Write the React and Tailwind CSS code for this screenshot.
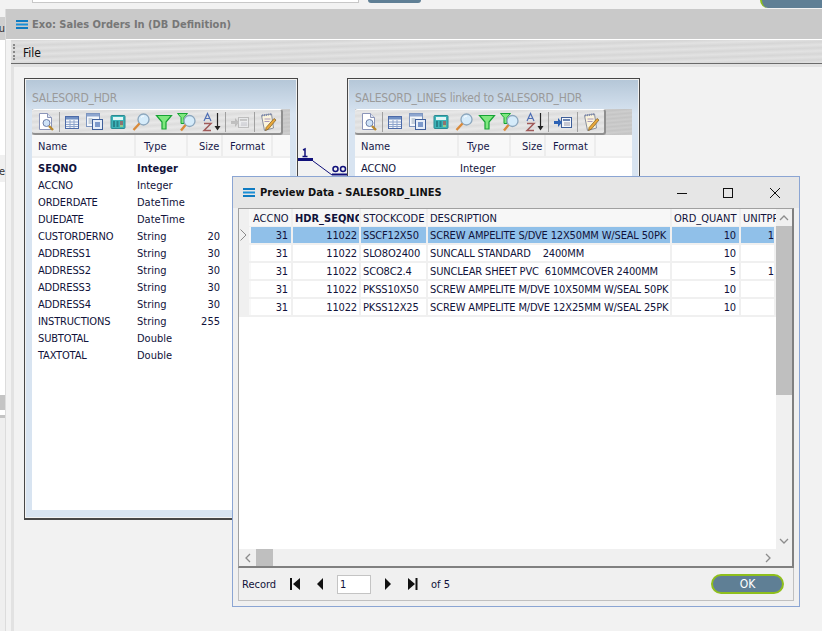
import React from "react";

const DocIcon = () => (
  <svg width="20" height="20" viewBox="0 0 20 20">
    <path d="M3.500 1.500h8l4 4v12h-12z" fill="#fff" stroke="#8a94b8" />
    <path d="M11.500 1.500v4h4" fill="#dfe6f2" stroke="#8a94b8" />
    <circle cx="10.500" cy="11" r="3.500" fill="#cfe3f7" stroke="#6d7fa8" />
    <path d="M13 14l4 4" stroke="#b8892e" strokeWidth="2.400" />
  </svg>
);
const TableIcon = () => (
  <svg width="18" height="18" viewBox="0 0 18 18">
    <rect x="2.500" y="3.500" width="13" height="12" fill="#f4f7fb" stroke="#4c6aa8" />
    <rect x="3" y="4" width="12" height="2.500" fill="#6f8fc4" />
    <path d="M3 9h12M3 11.500h12M3 13.500h12M7 7v8M11 7v8" stroke="#8ea4cc" />
  </svg>
);
const WindowsIcon = () => (
  <svg width="20" height="20" viewBox="0 0 20 20">
    <rect x="1.500" y="1.500" width="13" height="13" fill="#f4f7fb" stroke="#7d95bf" />
    <rect x="2" y="2" width="12" height="2.500" fill="#8ea6cf" />
    <path d="M3.500 7h4M3.500 9h4M3.500 11h4" stroke="#9ab" />
    <rect x="7.500" y="7.500" width="10" height="10" fill="#e6eef8" stroke="#3f5f9a" />
    <rect x="10" y="10" width="5" height="5" fill="#7d9acb" />
  </svg>
);
const CalcIcon = () => (
  <svg width="18" height="18" viewBox="0 0 18 18">
    <rect x="2" y="2.500" width="14" height="13" rx="1" fill="#3cb4b8" stroke="#2a8a92" />
    <rect x="4" y="4" width="10" height="3" fill="#e0f6f6" />
    <path d="M4 9h2M7.500 9h2M4 11h2M7.500 11h2M4 13h2M7.500 13h2" stroke="#14505c" />
    <path d="M11 9h3M11 11h3" stroke="#e0352b" />
    <path d="M11 13h3" stroke="#f1e05a" />
  </svg>
);
const MagIcon = () => (
  <svg width="20" height="20" viewBox="0 0 20 20">
    <circle cx="12.500" cy="7.500" r="5.500" fill="#d5ebfa" stroke="#8ba6bd" strokeWidth="1.300" />
    <path d="M10 5.500a3.500 3.500 0 0 1 3-1.500" stroke="#fff" fill="none" />
    <path d="M8.500 11.500L2.500 18" stroke="#d98a3a" strokeWidth="2.400" />
  </svg>
);
const FunnelIcon = () => (
  <svg width="20" height="20" viewBox="0 0 20 20">
    <path d="M2.500 3.500h15l-5.500 6.500v7h-4v-7z" fill="#7fe87f" stroke="#17a335" strokeWidth="1.200" />
  </svg>
);
const FunnelMagIcon = () => (
  <svg width="22" height="20" viewBox="0 0 22 20">
    <path d="M1.500 1.500h10l-3.500 4v6h-3v-6z" fill="#7fe87f" stroke="#17a335" />
    <circle cx="13.500" cy="9" r="5.500" fill="#d5ebfa" stroke="#8ba6bd" strokeWidth="1.300" />
    <path d="M9.500 13L5 18.500" stroke="#d98a3a" strokeWidth="2.400" />
  </svg>
);
const SortIcon = () => (
  <svg width="22" height="20" viewBox="0 0 22 20">
    <path d="M3 9L6.500 1.500L10 9M4.500 6.500h4" fill="none" stroke="#4f6fb5" strokeWidth="1.200" />
    <path d="M3 11.500h7L3 18.500h7" fill="none" stroke="#a05a5a" strokeWidth="1.500" />
    <path d="M16.500 1v15" stroke="#222" strokeWidth="1.200" />
    <path d="M13.500 14h6l-3 4.500z" fill="#222" />
  </svg>
);
const MoveIcon = ({ off }) => (
  <svg width="20" height="16" viewBox="0 0 20 16" opacity={off ? 0.4 : 1}>
    <rect x="8.500" y="3.500" width="10" height="10" fill="#f4f7fb" stroke={off ? "#888" : "#3f5f9a"} />
    <path d="M10 6h7" stroke={off ? "#888" : "#3f5f9a"} strokeWidth="1.500" />
    <path d="M11 9h6M11 11h6" stroke="#99a" />
    <path d="M1 7h4V4l4 4.500L5 13v-3H1z" fill={off ? "#888" : "#2d62b5"} />
  </svg>
);
const NoteIcon = () => (
  <svg width="20" height="20" viewBox="0 0 20 20">
    <path d="M3.500 3.500l10-1.500 2 14-9 2.500z" fill="#fbf4dc" stroke="#8a8f9e" />
    <path d="M4 3.500l10-1.500" stroke="#7a88b0" strokeWidth="2" strokeDasharray="1 1" />
    <path d="M6.500 7h6M6.500 9.500h5" stroke="#a9b" />
    <path d="M16 6.500l2 1.500-7.500 9-3 1.500.6-3z" fill="#e9a83a" stroke="#7a5a20" strokeWidth=".7" />
  </svg>
);

const Sep = () => <div className="w-px h-[20px] bg-[#a0a0a0]" />;
const Slot = ({ w, children }) => (
  <div className={`${w} flex items-center justify-center`}>{children}</div>
);

const Toolbar = ({ off }) => (
  <div className="flex h-[26px] shrink-0 bg-[#c9c9c9] bg-[repeating-linear-gradient(175deg,#c4c4c4_0px,#cecece_2px,#c4c4c4_4px)]">
    <div className="w-[251px] flex items-center rounded-[3px] border-b-2 border-r-2 border-[#8f8f8f] border-t border-t-white bg-[#e2e2e2] bg-[repeating-linear-gradient(176deg,#dcdcdc_0px,#e8e8e8_3px,#dcdcdc_6px)]">
      <Slot w="w-[27px]"><DocIcon /></Slot>
      <Sep />
      <Slot w="w-[23px]"><TableIcon /></Slot>
      <Slot w="w-[23px]"><WindowsIcon /></Slot>
      <Slot w="w-[23px]"><CalcIcon /></Slot>
      <Slot w="w-[23px]"><MagIcon /></Slot>
      <Slot w="w-[23px]"><FunnelIcon /></Slot>
      <Slot w="w-[23px]"><FunnelMagIcon /></Slot>
      <Slot w="w-[27px]"><SortIcon /></Slot>
      <Sep />
      <Slot w="w-[28px]"><MoveIcon off={off} /></Slot>
      <Sep />
      <Slot w="w-[26px]"><NoteIcon /></Slot>
    </div>
  </div>
);

const HeadCell = ({ w, pl, children }) => (
  <div className={`${w} ${pl} h-full shrink-0 flex items-center pt-[2px] border-r-2 border-[#ededed]`}>{children}</div>
);

const Head = () => (
  <div className="flex h-[23px] shrink-0 items-center bg-[#f8f8f8] border-b-2 border-[#efefef] text-[#16184a]">
    <HeadCell w="w-[104px]" pl="pl-[6px]">Name</HeadCell>
    <HeadCell w="w-[52px]" pl="pl-[8px]">Type</HeadCell>
    <HeadCell w="w-[35px]" pl="pl-[11px]">Size</HeadCell>
    <HeadCell w="w-[50px]" pl="pl-[7px]">Format</HeadCell>
    <div className="flex-1" />
  </div>
);

const FieldRow = ({ name, type, size, bold }) => (
  <div className={`flex h-[17px] items-center ${bold ? "font-bold" : ""}`}>
    <div className={`w-[105px] pl-[6px] shrink-0 whitespace-nowrap ${bold ? "" : "tracking-[-0.15px]"}`}>{name}</div>
    <div className="w-[62px] shrink-0">{type}</div>
    <div className="w-[21px] text-right shrink-0">{size}</div>
  </div>
);

const Panel = ({ title, className, off, children }) => (
  <div className={`absolute top-[78px] h-[442px] border border-[#474747] border-b-2 p-[1px] ${className}`}>
    <div className="h-full flex flex-col px-[6px] pb-[7px] bg-[linear-gradient(to_bottom,#b5c7d8_0px,#d8e4f1_34px)]">
      <div className="h-[29px] shrink-0 flex items-center pt-[7px] text-[12px] tracking-[-0.24px] text-[#9a9a9a]">{title}</div>
      <Toolbar off={off} />
      <div className="flex-1 flex flex-col bg-white overflow-hidden">
        <Head />
        <div className="pt-[2px]">{children}</div>
      </div>
    </div>
  </div>
);

const fields = [
  ["SEQNO", "Integer", "", true],
  ["ACCNO", "Integer", ""],
  ["ORDERDATE", "DateTime", ""],
  ["DUEDATE", "DateTime", ""],
  ["CUSTORDERNO", "String", "20"],
  ["ADDRESS1", "String", "30"],
  ["ADDRESS2", "String", "30"],
  ["ADDRESS3", "String", "30"],
  ["ADDRESS4", "String", "30"],
  ["INSTRUCTIONS", "String", "255"],
  ["SUBTOTAL", "Double", ""],
  ["TAXTOTAL", "Double", ""],
];

const rows = [
  ["31", "11022", "SSCF12X50", "SCREW AMPELITE S/DVE 12X50MM W/SEAL 50PK", "10", "1"],
  ["31", "11022", "SLO8O2400", "SUNCALL STANDARD    2400MM", "10", ""],
  ["31", "11022", "SCO8C2.4", "SUNCLEAR SHEET PVC  610MMCOVER 2400MM", "5", "1"],
  ["31", "11022", "PKSS10X50", "SCREW AMPELITE M/DVE 10X50MM W/SEAL 50PK", "10", ""],
  ["31", "11022", "PKSS12X25", "SCREW AMPELITE M/DVE 12X25MM W/SEAL 25PK", "10", ""],
];

const cols = "grid-cols-[12px_42px_68px_67px_244px_69px_35px]";

const PreviewRow = ({ r, sel }) => {
  const bg = sel ? "bg-[#90c0e9]" : "bg-white";
  const cell = `${bg} h-full flex items-center pt-[1px] border-r-2 border-[#f0f0f0] overflow-hidden whitespace-pre tracking-[-0.15px]`;
  return (
    <div className={`grid ${cols} h-[18px] border-b-2 border-[#f0f0f0]`}>
      <div className="h-full flex items-center bg-[#f0f0f0] border-r-2 border-[#f8f8f8]">
        {sel && (
          <svg width="9" height="14" viewBox="0 0 9 14"><path d="M1.500 1.500L7 7l-5.500 5.500" fill="none" stroke="#8a8a8a" /></svg>
        )}
      </div>
      <div className={`${cell} justify-end pr-[3px]`}>{r[0]}</div>
      <div className={`${cell} justify-end pr-[2px]`}>{r[1]}</div>
      <div className={`${cell} pl-[2px]`}>{r[2]}</div>
      <div className={`${cell} pl-[2px]`}>{r[3]}</div>
      <div className={`${cell} justify-end pr-[3px]`}>{r[4]}</div>
      <div className={`${cell} justify-end border-r-0`}>{r[5]}</div>
    </div>
  );
};

const Chevron = ({ d }) => (
  <svg width="12" height="12" viewBox="0 0 12 12"><path d={d} fill="none" stroke="#8c8c8c" strokeWidth="1.300" /></svg>
);

const NavBtn = ({ d }) => (
  <svg className="w-[14px] h-[12px]" viewBox="0 0 14 12"><path d={d} fill="#111" /></svg>
);

const headCell = "h-full flex items-center pt-[1px] pl-[2px] border-r-2 border-[#efefef] overflow-hidden whitespace-nowrap";

const MenuMark = () => (
  <svg width="12" height="9" viewBox="0 0 12 9">
    <path d="M0 0h12v2H0z" fill="#0e7bc2" />
    <path d="M0 3.500h12v2H0z" fill="#1a8fd6" />
    <path d="M0 7h12v2H0z" fill="#0e7bc2" />
  </svg>
);

export default function App() {
  return (
    <div className="relative w-[822px] h-[631px] overflow-hidden bg-[#f0f0f0] text-[11px] leading-none text-[#10123a] [font-family:'DejaVu_Sans_Condensed','DejaVu_Sans',sans-serif] [font-stretch:condensed]">
      {/* top strip of the host page */}
      <div className="h-[9px] flex bg-[#f2f2f2]">
        <div className="ml-[32px] w-[327px] h-[3px] bg-white border-b border-r border-l border-[#c8c8c8]" />
        <div className="ml-[9px] w-[53px] h-[3px] rounded-b-[6px] bg-[#5f7f95]" />
        <div className="ml-auto w-[62px] h-[8px] rounded-bl-[8px] bg-[#5f7f95] border-l-2 border-[#8fbf20]" />
      </div>

      <div className="flex h-[622px]">
        {/* sliver of the page behind */}
        <div className="w-[5px] shrink-0 flex flex-col overflow-hidden bg-white text-[#333]">
          <div className="h-[8px] bg-[#f2f2f2]" />
          <div className="h-[23px] bg-[#cfcfcf] flex items-center justify-end">u</div>
          <div className="h-[115px] bg-white" />
          <div className="h-[27px] bg-[#f0f0f0] flex items-center justify-end pt-[6px]">e</div>
          <div className="h-[213px] bg-white" />
          <div className="h-[15px] bg-[#c4c4c4]" />
          <div className="h-[8px] bg-white border-b-[3px] border-[#c4c4c4]" />
          <div className="flex-1 bg-[#efefef]" />
        </div>

        {/* main window */}
        <div className="flex-1 flex flex-col border-l border-[#dcdcdc] bg-[#f2f2f2]">
          <div className="h-[31px] shrink-0 flex items-center gap-[4px] pl-[10px] bg-[#c9c9c9] border-b border-white">
            <MenuMark />
            <span className="font-bold text-[#777] text-[11px]">Exo: Sales Orders In (DB Definition)</span>
          </div>
          <div className="flex-1 flex">
            <div className="w-[5px] shrink-0" />
            <div className="flex-1 flex flex-col">
              <div className="h-[24px] shrink-0 flex items-center pl-[2px] border-b border-[#6a6a6a] bg-[#dadada] bg-[repeating-linear-gradient(178deg,#d6d6d6_0px,#e2e2e2_3px,#d6d6d6_6px)] text-[12px] text-[#111]">
                <div className="h-[16px] w-[2px] border-l-2 border-dotted border-[#888]" />
                <span className="ml-[8px] pt-[2px]">File</span>
              </div>
              <div className="flex-1 border-t-[3px] border-l-[3px] border-[#e2e2e2]" />
            </div>
          </div>
        </div>
      </div>

      <Panel title="SALESORD_HDR" className="left-[24px] w-[274px]" off>
        {fields.map((f) => (
          <FieldRow key={f[0]} name={f[0]} type={f[1]} size={f[2]} bold={f[3]} />
        ))}
      </Panel>

      <Panel title="SALESORD_LINES linked to SALESORD_HDR" className="left-[347px] w-[293px]">
        <FieldRow name="ACCNO" type="Integer" size="" />
      </Panel>

      {/* relation line */}
      <svg className="absolute left-[296px] top-[138px]" width="52" height="40" viewBox="0 0 52 40">
        <path d="M2 21.500h15" stroke="#10107a" strokeWidth="3" />
        <path d="M7 12l2-1v7M6.500 18.500h5" stroke="#10107a" strokeWidth="1.500" fill="none" />
        <path d="M17 23l19 14" stroke="#10107a" />
        <path d="M36 36.500h15" stroke="#10107a" strokeWidth="2" />
        <circle cx="39.500" cy="31" r="2.500" fill="none" stroke="#10107a" strokeWidth="1.500" />
        <circle cx="47" cy="31" r="2.500" fill="none" stroke="#10107a" strokeWidth="1.500" />
      </svg>

      {/* preview dialog */}
      <div className="absolute left-[232px] top-[176px] w-[568px] h-[431px] border border-[#8ba5d3] bg-[#f0f0f0] flex flex-col">
        <div className="h-[31px] shrink-0 flex items-center bg-[#e6e6e6] pl-[10px]">
          <MenuMark />
          <span className="ml-[5px] font-bold text-[11px] text-[#111]">Preview Data - SALESORD_LINES</span>
          <div className="ml-auto flex items-center">
            <svg width="12" height="12" viewBox="0 0 12 12" className="mr-[34px]"><path d="M1 6.500h10" stroke="#111" /></svg>
            <svg width="12" height="12" viewBox="0 0 12 12" className="mr-[35px]"><rect x="1.500" y="1.500" width="9" height="9" fill="none" stroke="#111" /></svg>
            <svg width="12" height="12" viewBox="0 0 12 12" className="mr-[18px]"><path d="M1 1l10 10M11 1L1 11" stroke="#111" /></svg>
          </div>
        </div>

        <div className="mx-[5px] h-[360px] shrink-0 border-t border-l border-r-2 border-b-2 border-t-[#a0a0a0] border-l-[#a0a0a0] border-r-[#808080] border-b-[#808080] bg-white flex flex-col">
          <div className="flex-1 flex min-h-0">
            <div className="flex-1 min-w-0 flex flex-col">
              <div className={`grid ${cols} h-[18px] bg-[#f7f7f7] border-b border-[#f0f0f0]`}>
                <div className="bg-[#f0f0f0] border-r-2 border-[#f8f8f8]" />
                <div className={headCell}>ACCNO</div>
                <div className={`${headCell} font-bold`}>HDR_SEQNO</div>
                <div className={headCell}>STOCKCODE</div>
                <div className={headCell}>DESCRIPTION</div>
                <div className={headCell}>ORD_QUANT</div>
                <div className="h-full flex items-center pt-[1px] pl-[2px] overflow-hidden whitespace-nowrap">UNITPRICE</div>
              </div>
              {rows.map((r, i) => (
                <PreviewRow key={r[2]} r={r} sel={i === 0} />
              ))}
            </div>
            <div className="w-[16px] shrink-0 flex flex-col bg-[#f0f0f0]">
              <div className="h-[17px] flex items-center justify-center"><Chevron d="M2 8l4-4 4 4" /></div>
              <div className="h-[169px] bg-[#bfbfbf]" />
              <div className="flex-1" />
              <div className="h-[17px] flex items-center justify-center"><Chevron d="M2 4l4 4 4-4" /></div>
            </div>
          </div>
          <div className="h-[17px] shrink-0 flex items-center bg-[#f0f0f0]">
            <div className="w-[17px] flex justify-center"><Chevron d="M8 2L4 6l4 4" /></div>
            <div className="w-[17px] h-full bg-[#bfbfbf]" />
            <div className="flex-1" />
            <div className="w-[17px] flex justify-center mr-[16px]"><Chevron d="M4 2l4 4-4 4" /></div>
          </div>
        </div>

        <div className="mx-[5px] h-[33px] shrink-0 flex items-center border-r border-b border-l border-[#c0c0c0] text-[#10123a] text-[11px]">
          <span className="ml-[3px] w-[46px] pt-[1px]">Record</span>
          <NavBtn d="M2 0h2v12H2zM12 0v12L5 6z" />
          <div className="w-[11px]" />
          <NavBtn d="M10 0v12L4 6z" />
          <input readOnly value="1" className="ml-[10px] w-[34px] h-[19px] pl-[2px] bg-white border border-[#c4c4c4] text-[11px] text-[#10123a] outline-none" />
          <div className="w-[10px]" />
          <NavBtn d="M4 0v12l6-6z" />
          <div className="w-[11px]" />
          <NavBtn d="M2 0v12l7-6zM9.500 0h2v12h-2z" />
          <span className="ml-[11px] pt-[1px]">of 5</span>
          <button className="ml-auto mr-[9px] w-[73px] h-[20px] rounded-full bg-[#5f7f95] border-2 border-[#8fbf1c] text-white text-[12px] leading-none">OK</button>
        </div>
      </div>
    </div>
  );
}
